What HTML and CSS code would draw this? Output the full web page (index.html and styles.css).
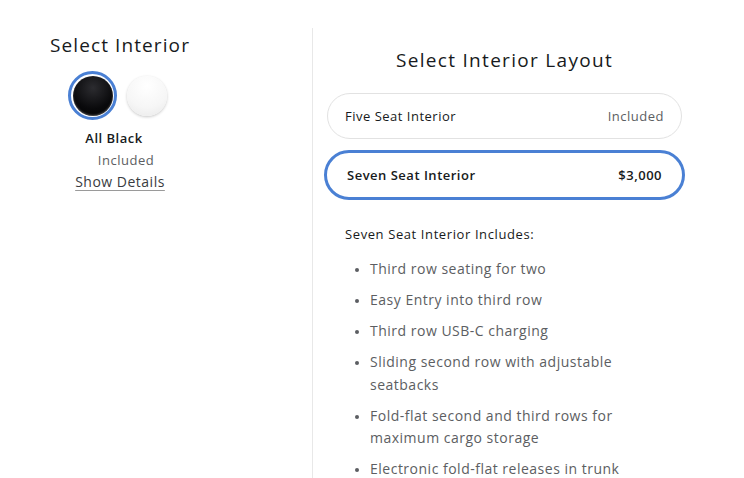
FILE: index.html
```html
<!DOCTYPE html>
<html>
<head>
<meta charset="utf-8">
<link rel="stylesheet" href="styles.css">
</head>
<body>
<div class="page">
  <section class="left">
    <h2 class="left-title">Select Interior</h2>
    <div class="swatches">
      <span class="swatch-ring"><span class="swatch black"></span></span>
      <span class="swatch white"></span>
    </div>
    <div class="swatch-name">All Black</div>
    <div class="swatch-price">Included</div>
    <a class="details" href="#">Show Details</a>
  </section>
  <section class="right">
    <h2 class="right-title">Select Interior Layout</h2>
    <div class="option">
      <span class="opt-name">Five Seat Interior</span>
      <span class="opt-price muted">Included</span>
    </div>
    <div class="option selected">
      <span class="opt-name">Seven Seat Interior</span>
      <span class="opt-price">$3,000</span>
    </div>
    <p class="includes">Seven Seat Interior Includes:</p>
    <ul class="features">
      <li>Third row seating for two</li>
      <li>Easy Entry into third row</li>
      <li>Third row USB-C charging</li>
      <li>Sliding second row with adjustable seatbacks</li>
      <li>Fold-flat second and third rows for maximum cargo storage</li>
      <li>Electronic fold-flat releases in trunk</li>
    </ul>
  </section>
</div>
</body>
</html>
```
FILE: styles.css
```css
* { box-sizing: border-box; }
html, body { margin: 0; padding: 0; background: #fff; }
body {
  font-family: "Open Sans", "Liberation Sans", sans-serif;
  color: #171a20;
  width: 744px;
  height: 478px;
  overflow: hidden;
}
.page {
  display: flex;
  height: 478px;
}
.left {
  width: 313px;
  flex: none;
  border-right: 1px solid #e8e8e8;
  margin-top: 28px;
  padding-left: 50px;
}
.left > * { width: 140px; }
.left-title {
  margin: 0;
  font-size: 19px;
  font-weight: 400;
  letter-spacing: 1.1px;
  line-height: 36px;
  text-align: center;
  margin-top: -1px;
  white-space: nowrap;
}
.swatches {
  display: flex;
  align-items: center;
  gap: 10px;
  margin-top: 8px;
  padding-left: 18px;
}
.swatch-ring {
  width: 49px;
  height: 49px;
  border-radius: 50%;
  border: 3px solid #4a80d4;
  display: flex;
  align-items: center;
  justify-content: center;
}
.swatch {
  display: block;
  width: 40px;
  height: 40px;
  border-radius: 50%;
}
.swatch.black {
  background: radial-gradient(circle at 50% 30%, #2c2c30 0%, #0a0a0c 60%, #000 100%);
  box-shadow: inset 0 -1px 2px rgba(255,255,255,0.3);
}
.swatch.white {
  background: radial-gradient(circle at 50% 25%, #ffffff 0%, #f6f6f6 60%, #e8e8e8 100%);
  box-shadow: 0 1px 3px rgba(0,0,0,0.22);
}
.swatch-name {
  margin-top: 7px;
  font-size: 13px;
  font-weight: 600;
  letter-spacing: 0.5px;
  text-align: center;
  padding-right: 12px;
  line-height: 22px;
}
.swatch-price {
  font-size: 13px;
  color: #5c5e62;
  letter-spacing: 0.5px;
  text-align: center;
  padding-left: 12px;
  line-height: 22px;
}
.details {
  display: block;
  font-size: 14px;
  color: #393c41;
  letter-spacing: 0.5px;
  text-align: center;
  text-decoration: underline;
  text-decoration-color: #9a9a9a;
  text-underline-offset: 3px;
  line-height: 22px;
}
.right {
  flex: 1;
  padding: 0 62px 0 14px;
}
.right-title {
  margin: 46px 0 0;
  font-size: 19px;
  font-weight: 400;
  letter-spacing: 1.3px;
  text-align: center;
  line-height: 28px;
}
.option {
  display: flex;
  justify-content: space-between;
  align-items: center;
  height: 46px;
  margin-top: 19px;
  padding: 0 17px 0 17px;
  border: 1px solid #e2e2e2;
  border-radius: 23px;
  font-size: 13px;
  font-weight: 500;
  letter-spacing: 0.5px;
  color: #171a20;
}
.option .muted { color: #5c5e62; font-weight: 400; }
.option.selected {
  height: 50px;
  margin: 11px -3px 0;
  padding: 0 20px;
  border: 3px solid #4a80d4;
  border-radius: 25px;
  font-weight: 600;
}
.includes {
  margin: 25px 0 0 18px;
  font-size: 13px;
  letter-spacing: 0.6px;
  line-height: 18px;
}
.features {
  margin: 15px 0 0;
  padding: 0 0 0 43px;
  font-size: 14px;
  color: #5c5e62;
  letter-spacing: 0.5px;
  line-height: 22.5px;
}
.features li { margin-bottom: 8.5px; width: 256px; }
.features li::marker { font-size: 11px; }
```
